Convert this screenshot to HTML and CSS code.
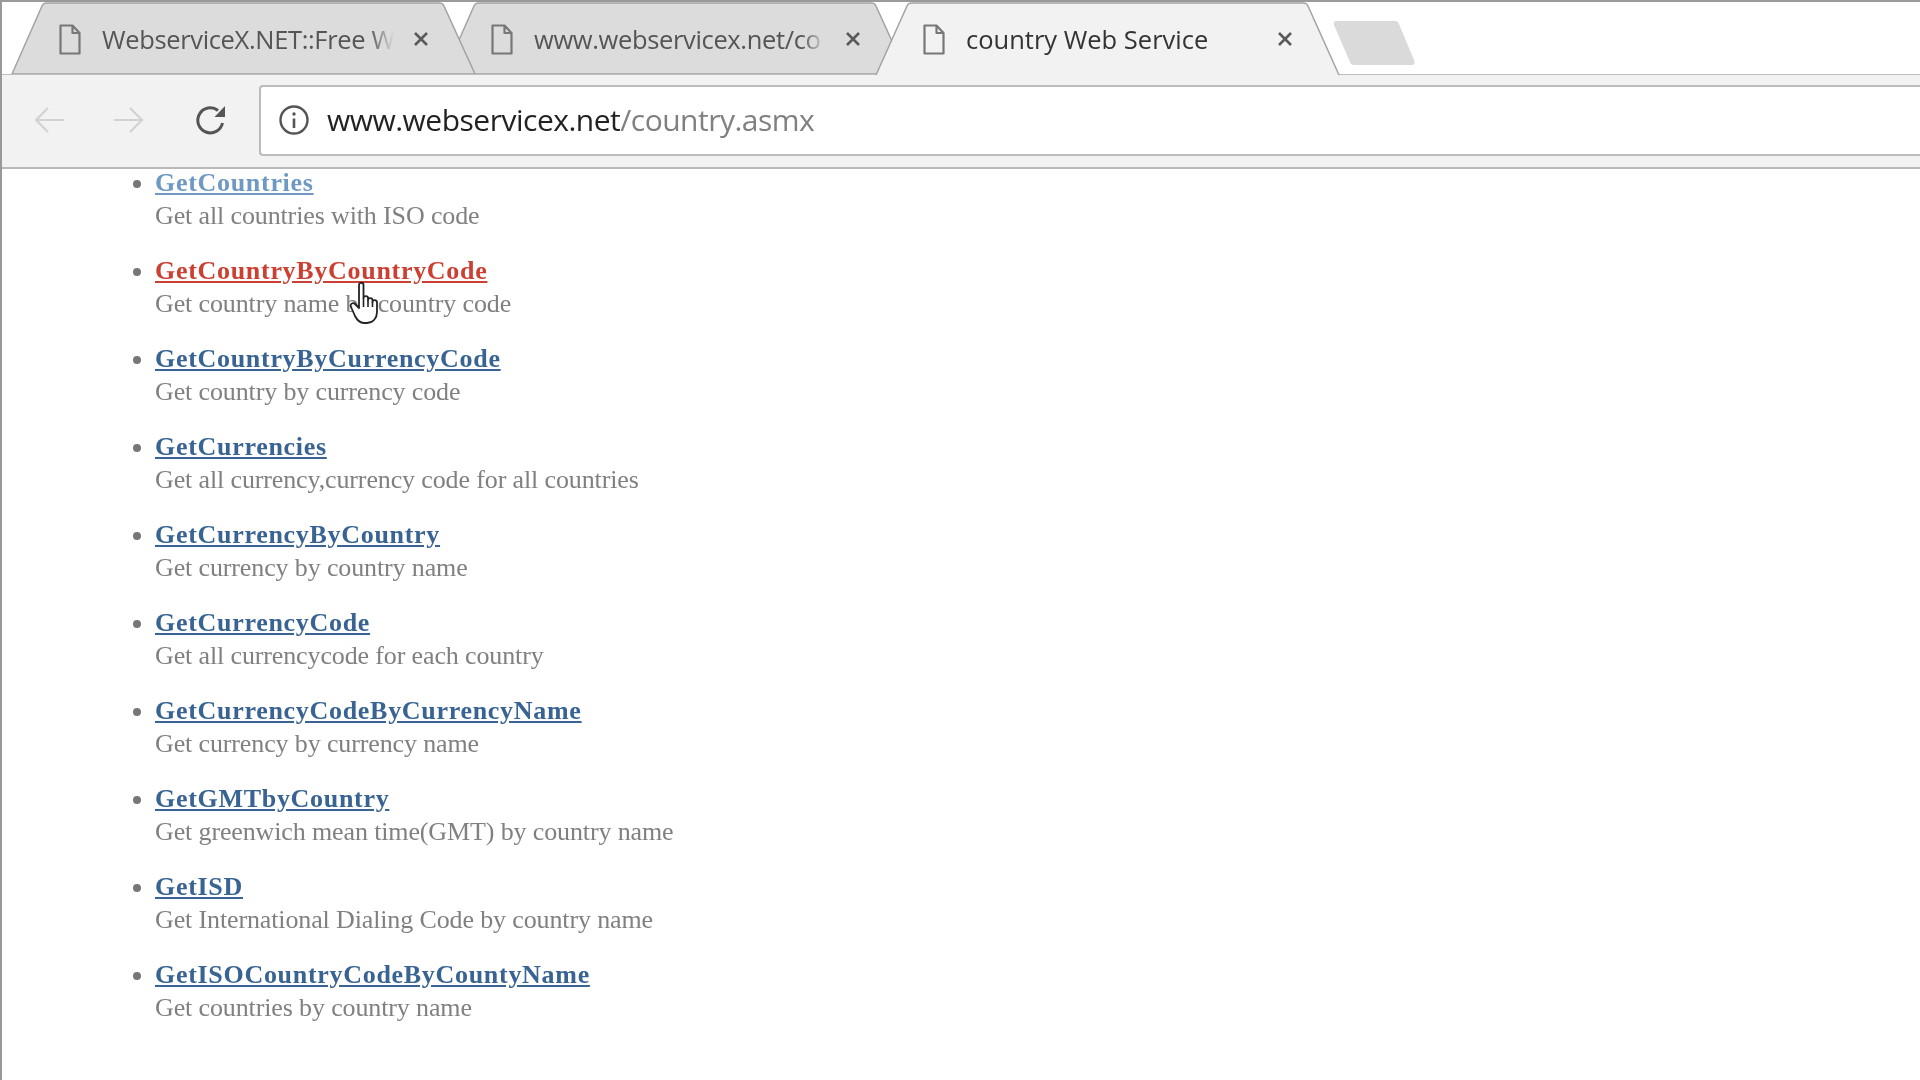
FILE: index.html
```html
<!DOCTYPE html>
<html lang="en">
<head>
<meta charset="utf-8">
<title>country Web Service</title>
<link rel="stylesheet" href="styles.css">
</head>
<body>
<svg class="defs" width="0" height="0" aria-hidden="true">
  <symbol id="doc" viewBox="0 0 22 31"><path d="M1.500 1.500h12l7 7.500v20.500h-19z M13.500 1.500v7.500h7" fill="none" stroke="currentColor" stroke-width="2.200" stroke-linejoin="round"/></symbol>
  <symbol id="close" viewBox="0 0 16 16"><path d="M2 2l12 12M14 2L2 14" fill="none" stroke="currentColor" stroke-width="2.600"/></symbol>
</svg>
<div class="window">
  <header class="chrome">
    <div class="tabstrip">
      <div class="tab">
        <svg class="tab-shape" viewBox="0 0 463 72" preserveAspectRatio="none"><path d="M0 72L30 4Q31 1 35 1H427Q431 1 432 4L463 72Z" fill="#dcdcdc" stroke="#a3a3a3" stroke-width="1.500"/></svg>
        <svg class="tab-icon"><use href="#doc"/></svg>
        <span class="tab-title fade">WebserviceX.NET::Free W</span>
        <svg class="tab-close"><use href="#close"/></svg>
      </div>
      <div class="tab">
        <svg class="tab-shape" viewBox="0 0 463 72" preserveAspectRatio="none"><path d="M0 72L30 4Q31 1 35 1H427Q431 1 432 4L463 72Z" fill="#dcdcdc" stroke="#a3a3a3" stroke-width="1.500"/></svg>
        <svg class="tab-icon"><use href="#doc"/></svg>
        <span class="tab-title fade">www.webservicex.net/co</span>
        <svg class="tab-close"><use href="#close"/></svg>
      </div>
      <div class="tab tab-active">
        <svg class="tab-shape" viewBox="0 0 463 72" preserveAspectRatio="none"><path d="M0 73L31 4Q32 1 36 1H427Q431 1 432 4L463 73" fill="#f2f2f2" stroke="#a3a3a3" stroke-width="1.500"/></svg>
        <svg class="tab-icon"><use href="#doc"/></svg>
        <span class="tab-title">country Web Service</span>
        <svg class="tab-close"><use href="#close"/></svg>
      </div>
      <svg class="newtab" viewBox="0 0 82 46"><path d="M3 1H62Q65 1 66 4L81 40Q83 45 78 45H21Q18 45 17 42L1 5Q0 1 3 1Z" fill="#dadada"/></svg>
    </div>
    <div class="toolbar">
      <div class="nav">
        <svg class="nav-icon disabled" viewBox="0 0 32 32"><path d="M31 16H3M15 4L3 16l12 12" fill="none" stroke="currentColor" stroke-width="2.200"/></svg>
        <svg class="nav-icon disabled" viewBox="0 0 32 32"><path d="M1 16h28M17 4l12 12-12 12" fill="none" stroke="currentColor" stroke-width="2.200"/></svg>
        <svg class="nav-icon" viewBox="-2 1 32 32"><path d="M27.500 20A12.500 12.500 0 1 1 23 7.500" fill="none" stroke="currentColor" stroke-width="3"/><path d="M30 3V14H19.500z" fill="currentColor"/></svg>
      </div>
      <div class="omnibox">
        <svg class="info" viewBox="0 0 32 32"><circle cx="16" cy="16" r="13.500" fill="none" stroke="currentColor" stroke-width="2.400"/><path d="M16 14.500V24" stroke="currentColor" stroke-width="2.600"/><circle cx="16" cy="10" r="1.700" fill="currentColor"/></svg>
        <span class="url"><span class="host">www.webservicex.net</span>/country.asmx</span>
      </div>
    </div>
  </header>
  <main class="page">
    <ul class="ops">
      <li><a class="op visited" href="#">GetCountries</a><span class="desc">Get all countries with ISO code</span></li>
      <li><a class="op hover" href="#">GetCountryByCountryCode</a><span class="desc">Get country name by country code</span></li>
      <li><a class="op" href="#">GetCountryByCurrencyCode</a><span class="desc">Get country by currency code</span></li>
      <li><a class="op" href="#">GetCurrencies</a><span class="desc">Get all currency,currency code for all countries</span></li>
      <li><a class="op" href="#">GetCurrencyByCountry</a><span class="desc">Get currency by country name</span></li>
      <li><a class="op" href="#">GetCurrencyCode</a><span class="desc">Get all currencycode for each country</span></li>
      <li><a class="op" href="#">GetCurrencyCodeByCurrencyName</a><span class="desc">Get currency by currency name</span></li>
      <li><a class="op" href="#">GetGMTbyCountry</a><span class="desc">Get greenwich mean time(GMT) by country name</span></li>
      <li><a class="op" href="#">GetISD</a><span class="desc">Get International Dialing Code by country name</span></li>
      <li><a class="op" href="#">GetISOCountryCodeByCountyName</a><span class="desc">Get countries by country name</span></li>
    </ul>
    <svg class="cursor" viewBox="0 0 32 44"><path d="M10 4c0-3 4.500-3 4.500 0v13c0-2.500 4.500-2.500 4.500 0v2c0-2.500 4.500-2.500 4.500 0v2c0-2.500 4.500-2.500 4.500 .5V31c0 6-4 11-10 11h-3c-5 0-7-3-9-7L2 26c-1.500-3 2-5 4-3l4 4z" fill="#fff" stroke="#222" stroke-width="1.800" stroke-linejoin="round"/><path d="M14.500 17v9M19 19v7M23.500 21v5" stroke="#222" stroke-width="1.600" fill="none"/></svg>
  </main>
</div>
</body>
</html>
```
FILE: styles.css
```css
* { box-sizing: border-box; }
html, body { margin: 0; height: 100%; background: #fff; overflow: hidden; }
.defs { position: absolute; }
.window {
  height: 1080px;
  border-left: 2px solid #999;
  border-top: 2px solid #9a9a9a;
  display: flex;
  flex-direction: column;
  font-family: "Open Sans", "Noto Sans", sans-serif;
  filter: blur(.45px);
}
.chrome { height: 167px; flex: none; display: flex; flex-direction: column; }
.tabstrip {
  height: 72px;
  flex: none;
  display: flex;
  padding-left: 10px;
  background: #fff;
  position: relative;
}
.tab {
  position: relative;
  flex: none;
  width: 463px;
  height: 72px;
  margin-right: -31px;
  display: flex;
  align-items: center;
  padding-left: 47px;
  color: #333;
}
.tab:first-child { z-index: 1; }
.tab-active { z-index: 3; }
.tab-shape { position: absolute; inset: 0; width: 100%; height: 100%; overflow: visible; }
.tab-icon { position: relative; width: 22px; height: 31px; color: #777; flex: none; margin-top: 3px; }
.tab-title {
  position: relative;
  margin-left: 21px;
  margin-top: 1px;
  width: 300px;
  flex: none;
  font-size: 25.500px;
  white-space: nowrap;
}
.fade {
  color: #555;
  letter-spacing: -.35px;
  -webkit-mask-image: linear-gradient(to right, #000 268px, transparent 292px);
  mask-image: linear-gradient(to right, #000 268px, transparent 292px);
}
.tab-close { position: relative; width: 16px; height: 16px; margin-left: 11px; color: #5a5a5a; flex: none; margin-top: 2px; }
.newtab { position: absolute; left: 1331px; top: 18px; width: 82px; height: 46px; }
.toolbar {
  height: 95px;
  flex: none;
  background: #f2f2f2;
  border-top: 1px solid #bdbdbd;
  border-bottom: 2px solid #b9b9b9;
  padding-bottom: 2px;
  display: flex;
  align-items: center;
  position: relative;
  z-index: 1;
}
.nav { display: flex; align-items: center; gap: 48px; padding-left: 31px; width: 257px; flex: none; }
.nav-icon { width: 32px; height: 32px; color: #555; flex: none; }
.nav-icon.disabled { color: #d2d2d2; }
.omnibox {
  flex: 1;
  height: 71px;
  background: #fff;
  border: 2px solid #bcbcbc;
  border-right: 0;
  border-radius: 4px 0 0 4px;
  display: flex;
  align-items: center;
  padding-left: 17px;
}
.info { width: 32px; height: 32px; color: #555; flex: none; }
.url { margin-left: 17px; margin-bottom: 1px; font-size: 30px; color: #808080; letter-spacing: -.5px; white-space: nowrap; }
.host { color: #222; }
.page { position: relative; flex: 1; font-family: "Liberation Serif", serif; }
.ops { margin: -2px 0 0; padding: 0 0 0 153px; color: #777; }
.ops li { margin-bottom: 23px; font-size: 26px; line-height: 32px; }
.ops li::marker { color: #777; }
.op { display: block; font-weight: 700; color: #386392; text-decoration: underline; letter-spacing: .7px; }
.op.visited { color: #6f98c2; }
.op.hover { color: #cc4033; }
.desc { display: block; margin-top: 1px; color: #808080; font-size: 26px; letter-spacing: -.13px; }
.cursor { position: absolute; left: 347px; top: 112px; width: 32px; height: 44px; }
```
